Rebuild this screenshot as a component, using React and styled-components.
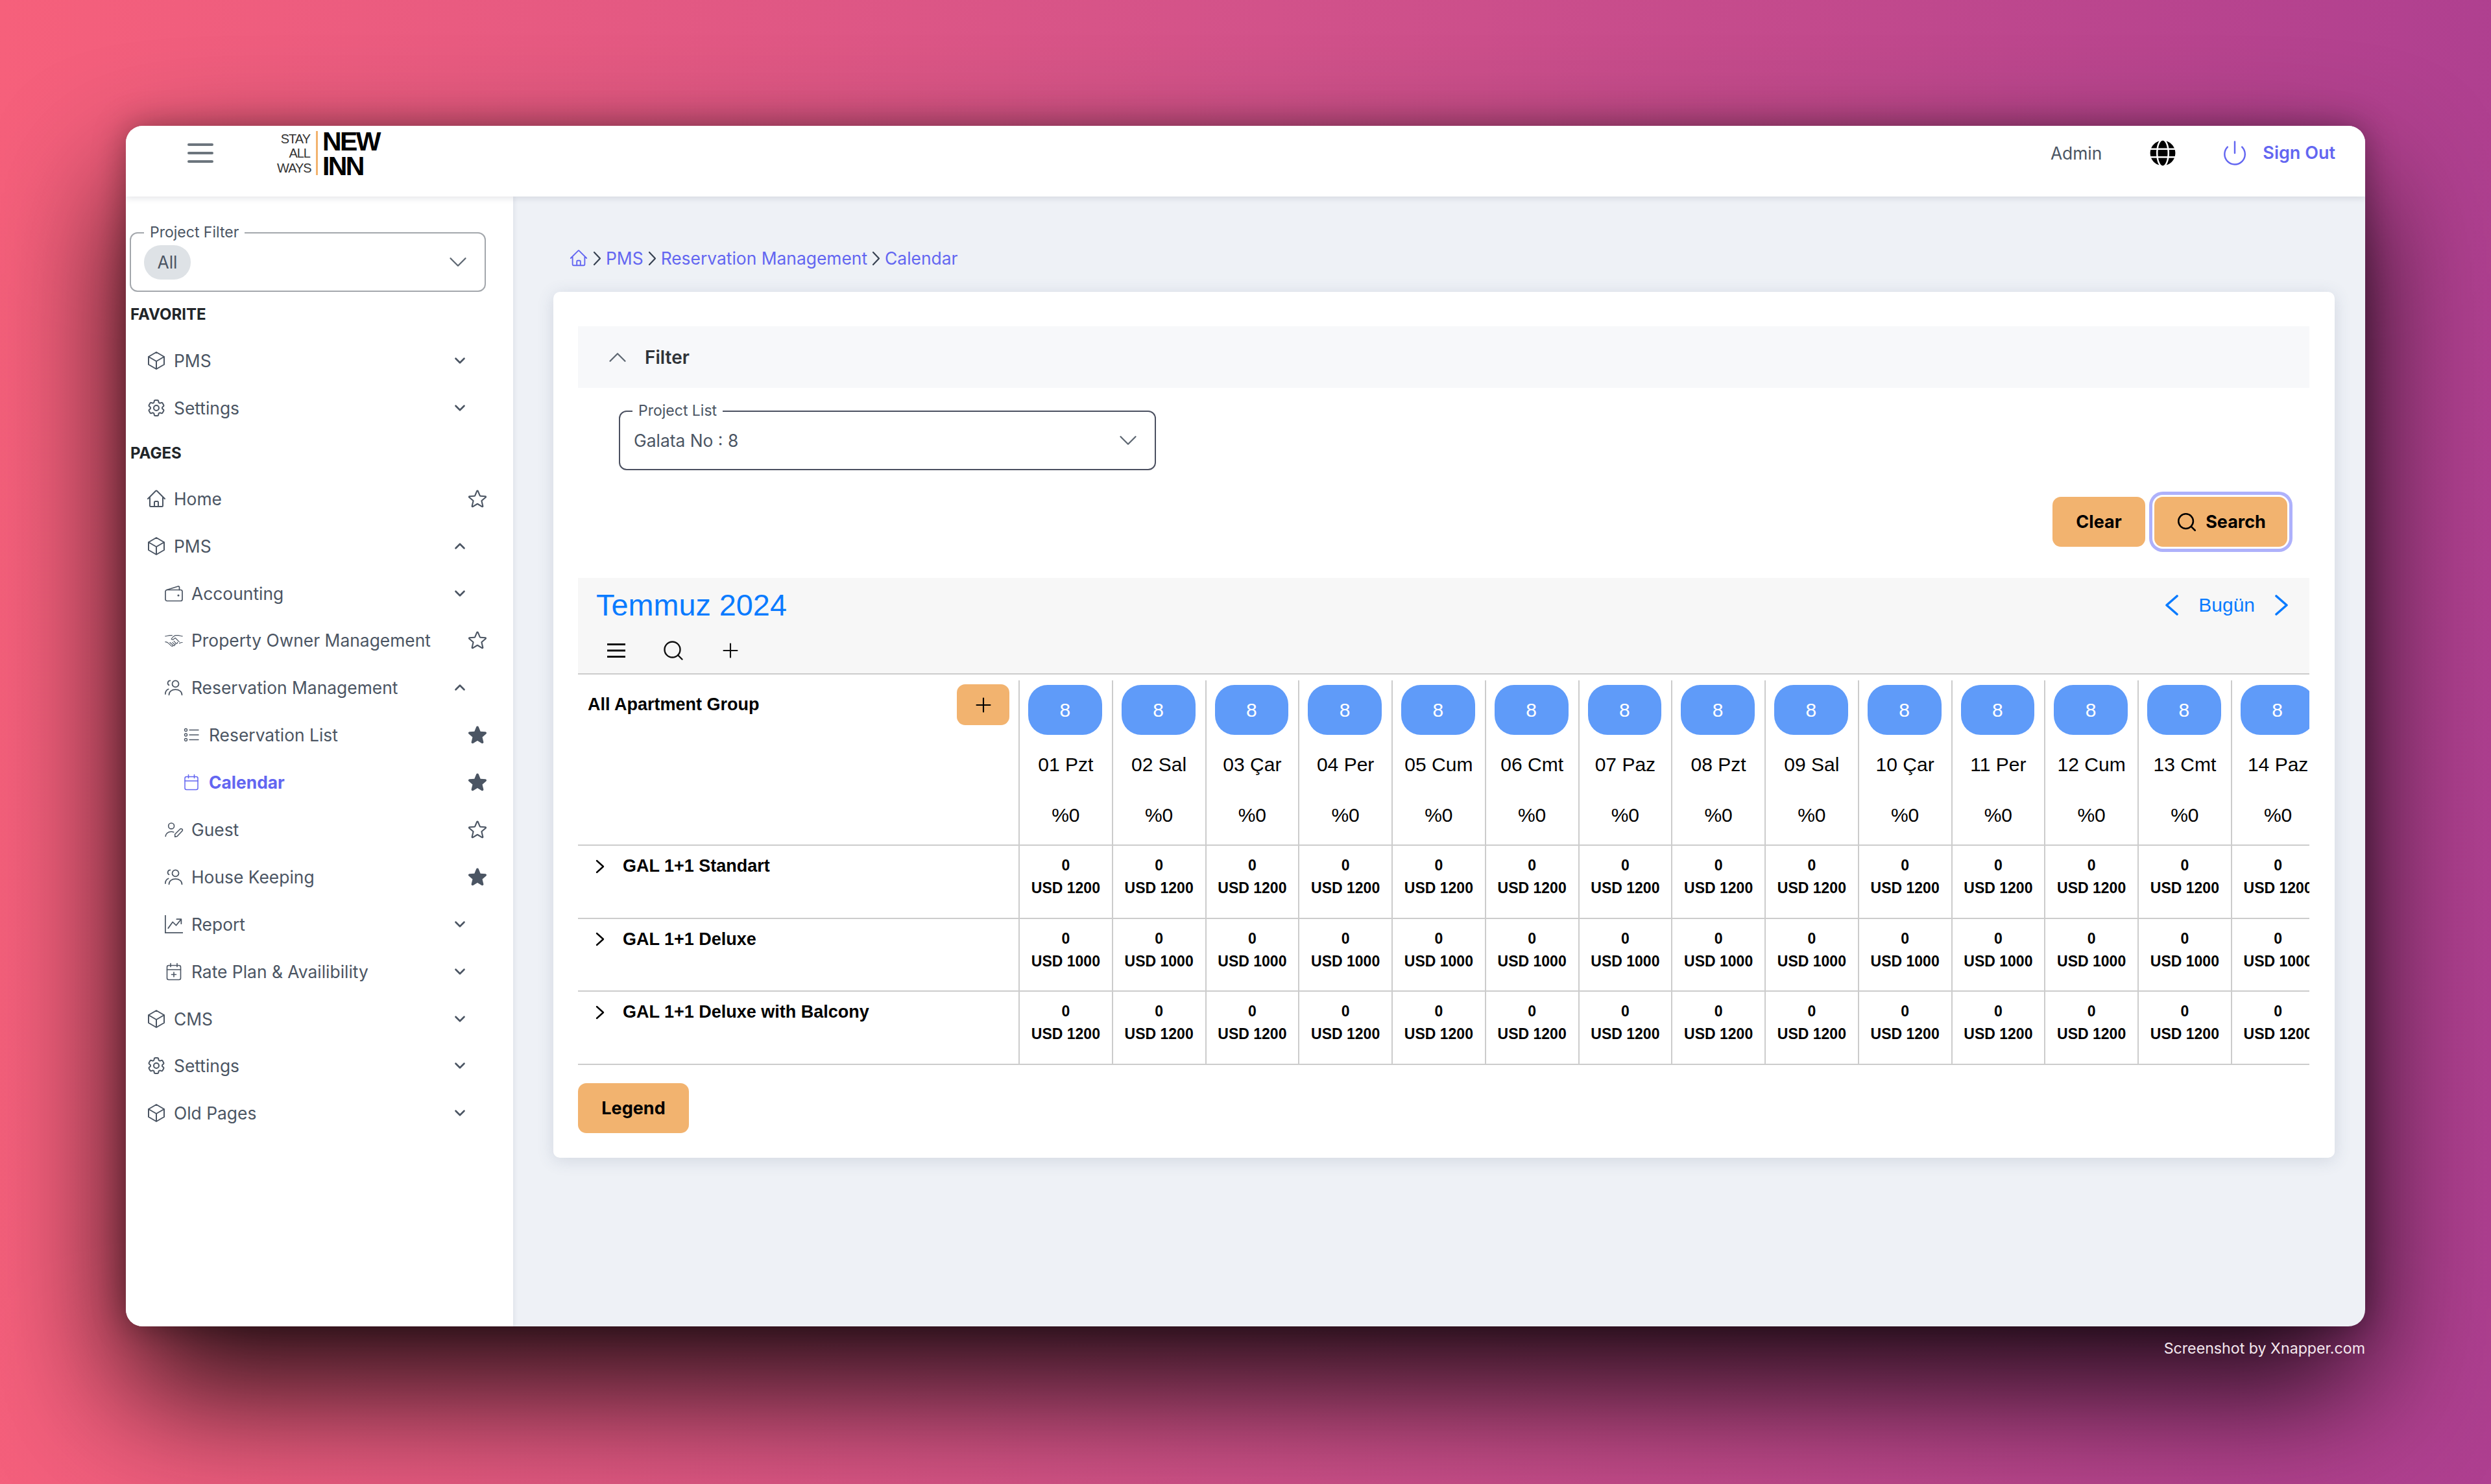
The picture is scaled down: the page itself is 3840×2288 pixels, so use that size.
import styled, { createGlobalStyle } from "styled-components";
import { ChevronDown, ChevronUp, Plus, Power, Search } from "lucide-react";
import { BsGraphUpArrow } from "react-icons/bs";
import { FaGlobe } from "react-icons/fa";
import {
  HiOutlineCog6Tooth,
  HiOutlineCube,
  HiOutlineHome,
  HiOutlineStar,
  HiStar,
} from "react-icons/hi2";

const GlobalStyle = createGlobalStyle`
  html, body {
    margin: 0;
    padding: 0;
  }
  * {
    box-sizing: border-box;
  }
`;

const Page = styled.div`
  width: 3840px;
  height: 2288px;
  padding: 194px 194px 0;
  overflow: hidden;
  font-family: Inter, "Liberation Sans", sans-serif;
  background: linear-gradient(92deg, #f6607b 0%, #d2528a 50%, #ae3f90 100%);
`;

const Window = styled.div`
  width: 3452px;
  height: 1851px;
  display: flex;
  flex-direction: column;
  border-radius: 26px;
  overflow: hidden;
  background: #eef1f6;
  box-shadow: 0 100px 200px rgba(0, 0, 0, 0.85), 0 0 50px rgba(0, 0, 0, 0.35);
`;

const Watermark = styled.div`
  margin-top: 22px;
  width: 3452px;
  text-align: right;
  font-size: 23.2px;
  line-height: 24px;
  color: #f4e8ee;
`;

const Header = styled.header`
  height: 109px;
  flex: none;
  display: flex;
  align-items: center;
  padding: 0 46px 26px 95px;
  background: #fff;
  box-shadow: 0 2px 10px rgba(40, 50, 80, 0.14);
  position: relative;
  z-index: 2;
`;

const MenuIcon = styled.svg`
  width: 40px;
  height: 30px;
  color: #6c757d;
`;

const Logo = styled.div`
  margin-left: 98px;
  height: 68px;
  display: flex;
  font-family: "Liberation Sans", sans-serif;
  color: #000;
`;

const LogoTag = styled.div`
  width: 51px;
  text-align: right;
  font-size: 20px;
  line-height: 22.5px;
  letter-spacing: -1px;
  color: #333;
  padding-top: 1px;
`;

const LogoName = styled.div`
  margin-left: 9px;
  padding-left: 7px;
  border-left: 3px solid #f2b36f;
  font-size: 41px;
  font-weight: 700;
  line-height: 38px;
  letter-spacing: -2.6px;
  & > div {
    height: 38px;
    margin-top: -3px;
  }
  & > div + div {
    margin-top: 0;
  }
`;

const HeaderRight = styled.div`
  margin-left: auto;
  display: flex;
  align-items: center;
`;

const AdminName = styled.span`
  font-size: 26.4px;
  color: #4b5563;
`;

const Globe = styled(FaGlobe)`
  margin-left: 74px;
  width: 40px;
  height: 40px;
  color: #000;
`;

const SignOut = styled.a`
  margin-left: 74px;
  display: flex;
  align-items: center;
  gap: 26px;
  font-size: 27px;
  font-weight: 600;
  color: #6366f1;
`;

const PowerIcon = styled(Power)`
  width: 42px;
  height: 42px;
  margin: 0 -4px;
`;

const Body = styled.div`
  flex: 1;
  min-height: 0;
  display: flex;
`;

const Sidebar = styled.aside`
  width: 597px;
  flex: none;
  padding: 55px 0 0 6px;
  background: #fff;
  box-shadow: 2px 0 6px rgba(40, 50, 80, 0.08);
`;

const OutlineBox = styled.div`
  position: relative;
  display: flex;
  align-items: center;
  border-radius: 12px;
  border: 2px solid ${(p) => p.$border};
  width: ${(p) => p.$width}px;
  height: 92px;
  padding: ${(p) => p.$padding};
`;

const BoxLabel = styled.span`
  position: absolute;
  top: -15px;
  left: ${(p) => p.$left}px;
  padding: 0 9px;
  background: #fff;
  font-size: 23px;
  line-height: 26px;
  color: #4b5563;
`;

const Chip = styled.span`
  width: 72px;
  height: 53px;
  border-radius: 26px;
  background: #dee2e6;
  display: flex;
  align-items: center;
  justify-content: center;
  font-size: 26.4px;
  color: #4b5563;
`;

const BigChevron = styled.span`
  margin-left: auto;
  display: flex;
  color: #5f6873;
  & svg {
    width: 46px;
    height: 46px;
    stroke-width: 1.2;
  }
`;

const SectionTitle = styled.div`
  height: 30px;
  line-height: 30px;
  margin: ${(p) => p.$margin};
  font-size: 24px;
  font-weight: 700;
  color: #212529;
`;

const NavRow = styled.div`
  width: 550px;
  height: 72.9px;
  display: flex;
  align-items: center;
  padding-left: ${(p) => p.$indent}px;
  color: ${(p) => (p.$active ? "#6366f1" : "#4b5563")};
  font-size: 26.4px;
  font-weight: ${(p) => (p.$active ? 700 : 400)};
`;

const NavIcon = styled.span`
  width: 28px;
  height: 32px;
  flex: none;
  margin-right: 13px;
  display: flex;
  align-items: center;
  justify-content: center;
  & svg {
    width: ${(p) => p.$size || 28}px;
    height: ${(p) => p.$size || 28}px;
    flex: none;
  }
`;

const NavChevron = styled.span`
  margin-left: auto;
  margin-right: 28px;
  display: flex;
  color: #4b5563;
  & svg {
    width: 26px;
    height: 26px;
    stroke-width: 2.4;
  }
`;

const NavStar = styled.span`
  margin-left: auto;
  margin-right: -3px;
  display: flex;
  color: #4b5563;
  & svg {
    width: 34px;
    height: 34px;
  }
`;

const Main = styled.main`
  flex: 1;
  min-width: 0;
  padding: 75px 47px 0 62px;
`;

const Breadcrumb = styled.nav`
  height: 40px;
  margin: 0 0 32px 24px;
  display: flex;
  align-items: center;
  gap: 7px;
  font-size: 26.4px;
  color: #6366f1;
  & > svg:first-child {
    width: 30px;
    height: 30px;
  }
`;

const Card = styled.section`
  height: 1335px;
  padding: 53px 39px 0 38px;
  border-radius: 10px;
  background: #fff;
  box-shadow: 0 4px 26px rgba(60, 80, 120, 0.16);
`;

const FilterBar = styled.div`
  height: 95px;
  display: flex;
  align-items: center;
  padding-left: 38px;
  gap: 19px;
  background: #f7f8fa;
  color: #5f6873;
  font-size: 28px;
  font-weight: 600;
  & svg {
    width: 46px;
    height: 46px;
    stroke-width: 1.2;
  }
`;

const FilterTitle = styled.span`
  color: #2f3338;
`;

const FilterBody = styled.div`
  padding: 35px 0 0 63px;
`;

const SelectValue = styled.span`
  font-size: 26.4px;
  color: #4b5563;
`;

const Actions = styled.div`
  margin-top: 41px;
  display: flex;
  justify-content: flex-end;
  gap: 14px;
  padding-right: 34px;
`;

const OrangeButton = styled.button`
  height: ${(p) => p.$height || 77}px;
  width: ${(p) => p.$width}px;
  flex: none;
  display: flex;
  align-items: center;
  justify-content: center;
  gap: 12px;
  padding: 0;
  border: none;
  border-radius: 13px;
  background: #f2b36f;
  color: #000;
  font-family: Inter, sans-serif;
  font-size: 27px;
  font-weight: 700;
  box-shadow: ${(p) => (p.$focused ? "0 0 0 3px #fff, 0 0 0 8px #aeb1fb" : "none")};
`;

const CalendarToolbar = styled.div`
  margin-top: 48px;
  height: 149px;
  padding: 14px 33px 0 28px;
  background: #f7f7f7;
  border-bottom: 2px solid #ccc;
  font-family: "Liberation Sans", sans-serif;
`;

const ToolbarTop = styled.div`
  height: 56px;
  display: flex;
  align-items: center;
  justify-content: space-between;
`;

const MonthTitle = styled.h2`
  margin: 0;
  font-size: 46.8px;
  font-weight: 400;
  line-height: 56px;
  color: #0a7bff;
`;

const MonthNav = styled.div`
  display: flex;
  align-items: center;
  gap: 31px;
  font-size: 30px;
  color: #0a7bff;
`;

const ToolbarIcons = styled.div`
  margin: 22px 0 0 17px;
  height: 40px;
  display: flex;
  align-items: center;
  gap: 52px;
  color: #111;
  & > svg {
    width: 36px;
    height: 36px;
    flex: none;
  }
  & > svg:first-child {
    width: 28px;
    margin-right: 4px;
  }
`;

const Grid = styled.div`
  width: 2669px;
  overflow: hidden;
  font-family: "Liberation Sans", sans-serif;
  color: #000;
`;

const GridRow = styled.div`
  height: ${(p) => p.$height}px;
  width: 2694px;
  display: grid;
  grid-template-columns: 679px repeat(14, 143.75px);
  border-bottom: 2px solid #ccc;
  position: relative;
`;

const GroupCell = styled.div`
  display: flex;
  align-items: flex-start;
  justify-content: space-between;
  padding: 15px 14px 0 15px;
`;

const GroupName = styled.span`
  font-size: 27px;
  font-weight: 700;
  line-height: 63px;
`;

const AddButton = styled(OrangeButton)`
  & svg {
    width: 36px;
    height: 36px;
    stroke-width: 1.4;
  }
`;

const DayCell = styled.div`
  margin-top: 9px;
  border-left: 2px solid #ccc;
  padding-top: 7px;
  text-align: center;
  font-size: 30px;
  line-height: 34px;
`;

const Pill = styled.div`
  height: 77px;
  margin: 0 15px 29px 13px;
  border-radius: 30px;
  background: #5f9bf9;
  color: #fff;
  line-height: 77px;
`;

const DayPercent = styled.div`
  margin-top: 44px;
`;

const RoomCell = styled.div`
  display: flex;
  align-items: center;
  height: 35px;
  margin-top: 14px;
  padding-left: 27px;
  gap: 28px;
  font-size: 27px;
  font-weight: 700;
`;

const PriceCell = styled.div`
  border-left: 2px solid #ccc;
  padding-top: 13px;
  text-align: center;
  font-size: 23px;
  font-weight: 700;
  line-height: 35px;
`;

const LegendRow = styled.div`
  margin-top: 28px;
`;

const Line = styled.svg`
  flex: none;
  fill: none;
  stroke: currentColor;
  stroke-linecap: round;
  stroke-linejoin: round;
`;

const UsersIcon = () => (
  <Line viewBox="0 0 24 24" strokeWidth="1.4">
    <circle cx="14" cy="7.5" r="4" />
    <path d="M6 21c0-4 3.400-6.500 8-6.500s8 2.500 8 6.500" />
    <path d="M7.500 3.500a3 3 0 0 0-1.500 5.600M1.500 20c0-3 1.300-5 3.800-6" />
  </Line>
);

const GuestIcon = () => (
  <Line viewBox="0 0 27 24" strokeWidth="1.4">
    <circle cx="10" cy="7" r="4" />
    <path d="M2 21.500c0-4 3.500-6.500 8-6.500 1.200 0 2.300.2 3.300.5" />
    <path d="M15 22v-3.500l7-7a1.800 1.800 0 0 1 3 2.500l-7 7.500z" />
  </Line>
);

const ListIcon = () => (
  <Line viewBox="0 0 24 24" strokeWidth="1.400">
    <circle cx="3.500" cy="4.500" r="2" />
    <circle cx="3.500" cy="12" r="2" />
    <circle cx="3.500" cy="19.500" r="2" />
    <path d="M9 4.500h14M9 12h14M9 19.500h14" />
  </Line>
);

const CalendarIcon = () => (
  <Line viewBox="0 0 24 26" strokeWidth="1.500">
    <rect x="2" y="4.500" width="20" height="20" rx="2.500" />
    <path d="M2 11h20M7.500 1.500v5M16.500 1.500v5" />
  </Line>
);

const WalletIcon = () => (
  <Line viewBox="0 0 28 26" strokeWidth="1.700">
    <rect x="1" y="7.500" width="26" height="17" rx="2.500" />
    <path d="M3 7.500 20.500 2c1-.3 2 .3 2 1.400v4.100" />
    <circle cx="21" cy="16" r="0.700" />
  </Line>
);

const RatePlanIcon = () => (
  <Line viewBox="0 0 24 28" strokeWidth="1.600">
    <rect x="1.500" y="4.500" width="21" height="22" rx="2.500" />
    <path d="M1.500 11h21M7 1.500v5M17 1.500v5M12 15v7M8.500 18.500h7" />
  </Line>
);

const HandshakeIcon = () => (
  <Line viewBox="0 0 32 24" strokeWidth="1.300">
    <path d="M1 5c3 0 5-1.500 8-1.500h4" />
    <path d="M31 5c-3 0-4.500-1.500-7-1.500h-4c-2.500 0-4.500 1.500-7 4.500l-1.500 2c1.500 1.500 3.500 1 5-.5l2-1.500 7 7" />
    <path d="M31 16c-2 0-3.500.5-5 1.500" />
    <path d="M1 15c2 0 3.500.5 5 2l6 5.500c1.200 1 2.800-.3 2-1.700" />
    <path d="M9 16l6.500 5.500c1.200 1 2.800-.3 2-1.700l-4-4" />
    <path d="M17.500 19c1.300 1 2.800-.4 2-1.800l-3.500-3.700" />
    <path d="M20.500 17.500c1.300.8 2.700-.6 1.800-1.900" />
  </Line>
);

const HomeIcon = () => <HiOutlineHome />;

const Caret = ({ dir, width, height, weight, color }) => (
  <Line
    viewBox={`0 0 ${width} ${height}`}
    width={width}
    height={height}
    strokeWidth={weight}
    style={{ color }}
  >
    <polyline
      points={
        dir === "left"
          ? `${width - 2},2 2,${height / 2} ${width - 2},${height - 2}`
          : `2,2 ${width - 2},${height / 2} 2,${height - 2}`
      }
    />
  </Line>
);

const DAYS = [
  "01 Pzt", "02 Sal", "03 Çar", "04 Per", "05 Cum", "06 Cmt", "07 Paz",
  "08 Pzt", "09 Sal", "10 Çar", "11 Per", "12 Cum", "13 Cmt", "14 Paz",
];

const ROOMS = [
  { name: "GAL 1+1 Standart", price: "USD 1200" },
  { name: "GAL 1+1 Deluxe", price: "USD 1000" },
  { name: "GAL 1+1 Deluxe with Balcony", price: "USD 1200" },
];

const NavItem = ({ icon, label, level = 0, open, star, active, size }) => (
  <NavRow $indent={[27, 54, 81][level]} $active={active}>
    <NavIcon $size={size}>{icon}</NavIcon>
    {label}
    {open !== undefined && (
      <NavChevron>{open ? <ChevronUp /> : <ChevronDown />}</NavChevron>
    )}
    {star && <NavStar>{star === "on" ? <HiStar /> : <HiOutlineStar />}</NavStar>}
  </NavRow>
);

export default function App() {
  return (
    <Page>
      <GlobalStyle />
      <Window>
        <Header>
          <MenuIcon viewBox="0 0 40 30" fill="currentColor">
            <rect y="0" width="40" height="4" rx="2" />
            <rect y="13" width="40" height="4" rx="2" />
            <rect y="26" width="40" height="4" rx="2" />
          </MenuIcon>
          <Logo>
            <LogoTag>
              STAY
              <br />
              ALL
              <br />
              WAYS
            </LogoTag>
            <LogoName>
              <div>NEW</div>
              <div>INN</div>
            </LogoName>
          </Logo>
          <HeaderRight>
            <AdminName>Admin</AdminName>
            <Globe />
            <SignOut>
              <PowerIcon strokeWidth={1.4} />
              Sign Out
            </SignOut>
          </HeaderRight>
        </Header>
        <Body>
          <Sidebar>
            <OutlineBox $border="#a3a7ac" $width={549} $padding="0 18px 0 20px">
              <BoxLabel $left={20}>Project Filter</BoxLabel>
              <Chip>All</Chip>
              <BigChevron>
                <ChevronDown />
              </BigChevron>
            </OutlineBox>
            <SectionTitle $margin="20px 0 19.5px 1px">FAVORITE</SectionTitle>
            <NavItem icon={<HiOutlineCube />} label="PMS" open={false} size={32} />
            <NavItem icon={<HiOutlineCog6Tooth />} label="Settings" open={false} size={32} />
            <SectionTitle $margin="18.5px 0 18.5px 1px">PAGES</SectionTitle>
            <NavItem icon={<HiOutlineHome />} label="Home" star="off" size={32} />
            <NavItem icon={<HiOutlineCube />} label="PMS" open size={32} />
            <NavItem icon={<WalletIcon />} label="Accounting" level={1} open={false} />
            <NavItem icon={<HandshakeIcon />} label="Property Owner Management" level={1} star="off" size={28} />
            <NavItem icon={<UsersIcon />} label="Reservation Management" level={1} open size={30} />
            <NavItem icon={<ListIcon />} label="Reservation List" level={2} star="on" size={24} />
            <NavItem icon={<CalendarIcon />} label="Calendar" level={2} star="on" active size={26} />
            <NavItem icon={<GuestIcon />} label="Guest" level={1} star="off" size={30} />
            <NavItem icon={<UsersIcon />} label="House Keeping" level={1} star="on" size={30} />
            <NavItem icon={<BsGraphUpArrow />} label="Report" level={1} open={false} />
            <NavItem icon={<RatePlanIcon />} label="Rate Plan & Availibility" level={1} open={false} />
            <NavItem icon={<HiOutlineCube />} label="CMS" open={false} size={32} />
            <NavItem icon={<HiOutlineCog6Tooth />} label="Settings" open={false} size={32} />
            <NavItem icon={<HiOutlineCube />} label="Old Pages" open={false} size={32} />
          </Sidebar>
          <Main>
            <Breadcrumb>
              <HomeIcon />
              <Caret width={13} height={23} weight={2.2} color="#374151" />
              PMS
              <Caret width={13} height={23} weight={2.2} color="#374151" />
              Reservation Management
              <Caret width={13} height={23} weight={2.2} color="#374151" />
              Calendar
            </Breadcrumb>
            <Card>
              <FilterBar>
                <ChevronUp />
                <FilterTitle>Filter</FilterTitle>
              </FilterBar>
              <FilterBody>
                <OutlineBox $border="#4b5060" $width={828} $padding="0 18px 0 21px">
                  <BoxLabel $left={19}>Project List</BoxLabel>
                  <SelectValue>Galata No : 8</SelectValue>
                  <BigChevron>
                    <ChevronDown />
                  </BigChevron>
                </OutlineBox>
              </FilterBody>
              <Actions>
                <OrangeButton $width={143}>Clear</OrangeButton>
                <OrangeButton $width={205} $focused>
                  <Search size={34} strokeWidth={1.8} />
                  Search
                </OrangeButton>
              </Actions>
              <CalendarToolbar>
                <ToolbarTop>
                  <MonthTitle>Temmuz 2024</MonthTitle>
                  <MonthNav>
                    <Caret dir="left" width={20} height={32} weight={3.6} />
                    Bugün
                    <Caret width={20} height={32} weight={3.6} />
                  </MonthNav>
                </ToolbarTop>
                <ToolbarIcons>
                  <svg viewBox="0 0 28 36" fill="currentColor">
                    <rect y="7" width="28" height="3" />
                    <rect y="16.500" width="28" height="3" />
                    <rect y="26" width="28" height="3" />
                  </svg>
                  <Search strokeWidth={1.6} />
                  <Plus strokeWidth={1.4} />
                </ToolbarIcons>
              </CalendarToolbar>
              <Grid>
                <GridRow $height={264}>
                  <GroupCell>
                    <GroupName>All Apartment Group</GroupName>
                    <AddButton $width={81} $height={63}>
                      <Plus />
                    </AddButton>
                  </GroupCell>
                  {DAYS.map((day) => (
                    <DayCell key={day}>
                      <Pill>8</Pill>
                      <div>{day}</div>
                      <DayPercent>%0</DayPercent>
                    </DayCell>
                  ))}
                </GridRow>
                {ROOMS.map((room) => (
                  <GridRow $height={112.700} key={room.name}>
                    <RoomCell>
                      <Caret width={14} height={22} weight={2.4} />
                      {room.name}
                    </RoomCell>
                    {DAYS.map((day) => (
                      <PriceCell key={day}>
                        0
                        <br />
                        {room.price}
                      </PriceCell>
                    ))}
                  </GridRow>
                ))}
              </Grid>
              <LegendRow>
                <OrangeButton $width={171}>Legend</OrangeButton>
              </LegendRow>
            </Card>
          </Main>
        </Body>
      </Window>
      <Watermark>Screenshot by Xnapper.com</Watermark>
    </Page>
  );
}
